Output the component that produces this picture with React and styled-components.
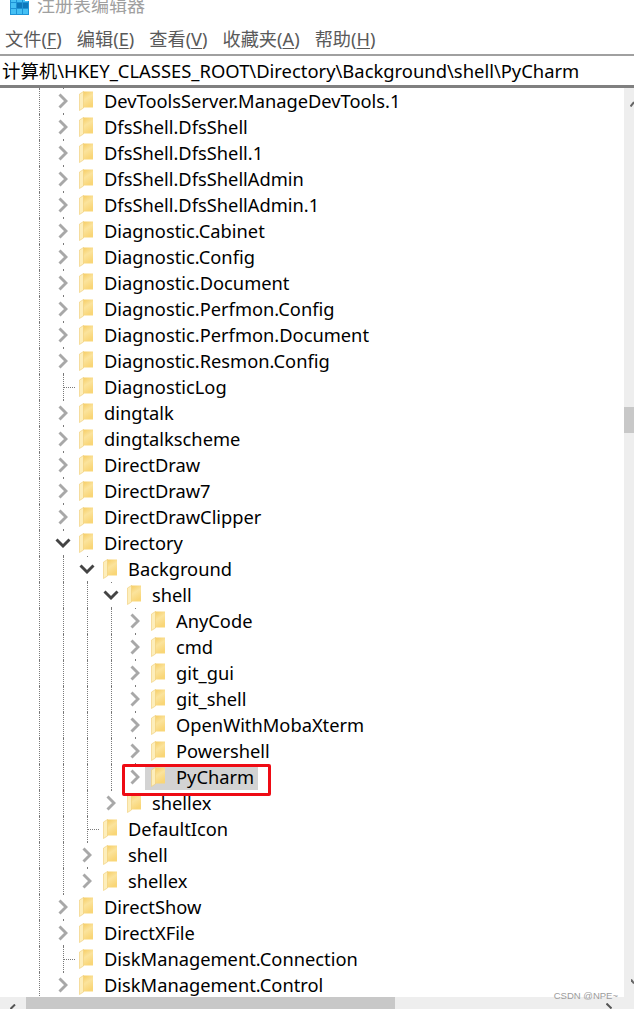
import React from 'react';
import styled, { createGlobalStyle } from 'styled-components';

const CJK = `"Noto Sans", "Noto Sans CJK SC", sans-serif`;

const GlobalStyle = createGlobalStyle`
  html, body { margin: 0; padding: 0; background: #fff; }
  body { width: 634px; height: 1009px; overflow: hidden; font-family: ${CJK}; }
`;

const Window = styled.div`
  position: relative;
  width: 634px;
  height: 1009px;
  display: flex;
  flex-direction: column;
  overflow: hidden;
`;

const TitleBar = styled.div`
  height: 22px;
  flex: none;
  display: flex;
  align-items: flex-start;
  gap: 8px;
  padding-left: 10px;
  overflow: hidden;
  svg { margin-top: -3px; }
`;

const TitleText = styled.span`
  margin-top: -7px;
  font-size: 18px;
  line-height: 24px;
  color: #a0a0a0;
`;

const MenuBar = styled.div`
  height: 32px;
  flex: none;
  display: flex;
  align-items: center;
  gap: 15px;
  padding-left: 5px;
  border-bottom: 2px solid #a0a0a0;
`;

const MenuItem = styled.span`
  font-size: 18.2px;
  color: #5a5a5a;
  u { text-underline-offset: 2px; }
`;

const PathBar = styled.div`
  height: 28px;
  flex: none;
  display: flex;
  align-items: center;
  padding: 0 0 1px 2px;
  font-size: 18.4px;
  color: #000;
  border-bottom: 3px solid #808080;
  white-space: nowrap;
`;

const Body = styled.div`
  flex: 1;
  display: flex;
  min-height: 0;
`;

const TreePane = styled.div`
  flex: 1;
  min-width: 0;
  display: flex;
  flex-direction: column;
`;

const Tree = styled.div`
  flex: 1;
  min-height: 0;
  overflow: hidden;
`;

const Row = styled.div`
  position: relative;
  height: 26px;
  display: flex;
  align-items: center;
  padding-left: ${(p) => 54 + p.$level * 24}px;
`;

const Guide = styled.i`
  position: absolute;
  top: 0;
  left: ${(p) => 39 + p.$column * 24}px;
  height: ${(p) => (p.$half ? '13px' : '26px')};
  border-left: 1px dotted #7a7a7a;
`;

const Tick = styled.i`
  position: absolute;
  top: 13px;
  left: ${(p) => 64 + p.$level * 24}px;
  width: 11px;
  border-top: 1px dotted #7a7a7a;
`;

const Expander = styled.span`
  position: relative;
  width: 18px;
  height: 24px;
  margin-right: 7px;
  display: flex;
  align-items: center;
  justify-content: center;
  background: ${(p) => (p.$empty ? 'transparent' : '#fff')};
`;

const Label = styled.span`
  position: relative;
  margin-left: 10px;
  font-size: 18.3px;
  line-height: 26px;
  color: #000;
  white-space: nowrap;
`;

const SelectedBand = styled.span`
  position: absolute;
  top: 3px;
  bottom: 0;
  left: 145px;
  width: 113px;
  background: #d3d3d3;
`;

const FolderSlot = styled.span`
  position: relative;
  display: flex;
`;

const Highlight = styled.span`
  position: absolute;
  left: 122px;
  top: 764px;
  width: 149px;
  height: 32px;
  box-sizing: border-box;
  border: 3px solid #ee0b14;
  border-radius: 2px;
  pointer-events: none;
`;

const VScroll = styled.div`
  position: relative;
  width: 10px;
  flex: none;
  background: #eeeeee;
`;

const VThumb = styled.div`
  height: 26px;
  margin-top: 319px;
  background: #c8c8c8;
`;

const HScroll = styled.div`
  position: relative;
  height: 12px;
  flex: none;
  background: #eeeeee;
  display: flex;
`;

const HThumb = styled.div`
  width: 369px;
  margin-left: 26px;
  background: #c8c8c8;
`;

const ArrowMark = styled.svg`
  position: absolute;
  left: ${(p) => p.$x}px;
  top: ${(p) => p.$y}px;
`;

const Watermark = styled.span`
  position: absolute;
  right: 16px;
  bottom: 8px;
  font-family: "Liberation Sans", sans-serif;
  font-size: 9.5px;
  color: #9c9c9c;
`;

const AppIcon = () => (
  <svg width="19" height="18" viewBox="0 0 19 18">
    <rect width="19" height="18" fill="#1e93d6" />
    <g fill="#45c0f4">
      <rect x="1" y="0" width="5" height="5" />
      <rect x="7" y="0" width="5" height="5" />
      <rect x="13" y="0" width="5" height="5" />
      <rect x="1" y="6" width="5" height="5" />
      <rect x="1" y="12" width="5" height="5" />
      <rect x="7" y="12" width="5" height="5" />
      <rect x="13" y="12" width="5" height="5" />
    </g>
    <g fill="#0d78bb">
      <rect x="7" y="6" width="5" height="5" />
      <rect x="13" y="6" width="5" height="5" />
    </g>
    <rect x="15" y="0" width="4" height="4" fill="#fff" />
  </svg>
);

const FolderIcon = () => (
  <svg width="15" height="20" viewBox="0 0 15 20">
    <defs>
      <linearGradient id="folderBody" x1="0" y1="0" x2="0.4" y2="1">
        <stop offset="0" stopColor="#f6cd62" />
        <stop offset="0.5" stopColor="#fbe39c" />
        <stop offset="1" stopColor="#f9d677" />
      </linearGradient>
    </defs>
    <path d="M4 0.5 H14 V16.5 H4 Z" fill="url(#folderBody)" />
    <path d="M0.5 3 L4.5 0.5 V17 L0.5 19.5 Z" fill="#fdeebb" stroke="#f0cd74" strokeWidth="0.6" />
  </svg>
);

const Chevron = ({ open }) =>
  open ? (
    <svg width="16" height="10" viewBox="0 0 16 10">
      <path d="M1.5 1.5 L8 8 L14.5 1.5" fill="none" stroke="#444" strokeWidth="2.9" />
    </svg>
  ) : (
    <svg width="10" height="16" viewBox="0 0 10 16">
      <path d="M1.5 1.5 L8 8 L1.5 14.5" fill="none" stroke="#a8a8a8" strokeWidth="2.9" />
    </svg>
  );

const leaf = (label) => ({ label });
const closed = (label, extra) => ({ label, closed: true, ...extra });

const roots = [
  closed('DevToolsServer.ManageDevTools.1'),
  closed('DfsShell.DfsShell'),
  closed('DfsShell.DfsShell.1'),
  closed('DfsShell.DfsShellAdmin'),
  closed('DfsShell.DfsShellAdmin.1'),
  closed('Diagnostic.Cabinet'),
  closed('Diagnostic.Config'),
  closed('Diagnostic.Document'),
  closed('Diagnostic.Perfmon.Config'),
  closed('Diagnostic.Perfmon.Document'),
  closed('Diagnostic.Resmon.Config'),
  leaf('DiagnosticLog'),
  closed('dingtalk'),
  closed('dingtalkscheme'),
  closed('DirectDraw'),
  closed('DirectDraw7'),
  closed('DirectDrawClipper'),
  {
    label: 'Directory',
    children: [
      {
        label: 'Background',
        children: [
          {
            label: 'shell',
            children: [
              closed('AnyCode'),
              closed('cmd'),
              closed('git_gui'),
              closed('git_shell'),
              closed('OpenWithMobaXterm'),
              closed('Powershell'),
              closed('PyCharm', { selected: true }),
            ],
          },
          closed('shellex'),
        ],
      },
      leaf('DefaultIcon'),
      closed('shell'),
      closed('shellex'),
    ],
  },
  closed('DirectShow'),
  closed('DirectXFile'),
  leaf('DiskManagement.Connection'),
  closed('DiskManagement.Control'),
];

// walks the tree, keeping which guide columns are still running
const flatten = (items, level, columns, openTail) =>
  items.flatMap((item, i) => {
    const last = openTail ? false : i === items.length - 1;
    const row = { ...item, level, columns, last };
    if (!item.children) return [row];
    return [row, ...flatten(item.children, level + 1, [...columns, ...(last ? [] : [level + 1])], false)];
  });

const rows = flatten(roots, 0, [0], true);

const Menu = ({ name, hotkey }) => (
  <MenuItem>
    {name}(<u>{hotkey}</u>)
  </MenuItem>
);

export default function App() {
  return (
    <Window>
      <GlobalStyle />
      <TitleBar>
        <AppIcon />
        <TitleText>注册表编辑器</TitleText>
      </TitleBar>
      <MenuBar>
        <Menu name="文件" hotkey="F" />
        <Menu name="编辑" hotkey="E" />
        <Menu name="查看" hotkey="V" />
        <Menu name="收藏夹" hotkey="A" />
        <Menu name="帮助" hotkey="H" />
      </MenuBar>
      <PathBar>计算机\HKEY_CLASSES_ROOT\Directory\Background\shell\PyCharm</PathBar>
      <Body>
        <TreePane>
          <Tree>
            {rows.map((row, i) => (
              <Row key={i} $level={row.level}>
                {row.columns.map((c) => (
                  <Guide key={c} $column={c} />
                ))}
                {!row.last && !row.columns.includes(row.level + 1) && <Guide $column={row.level + 1} />}
                {row.last && <Guide $column={row.level + 1} $half />}
                {row.selected && <SelectedBand />}
                {!row.closed && !row.children && <Tick $level={row.level} />}
                <Expander $empty={!row.closed && !row.children}>
                  {row.closed && <Chevron />}
                  {row.children && <Chevron open />}
                </Expander>
                <FolderSlot>
                  <FolderIcon />
                </FolderSlot>
                <Label>{row.label}</Label>
              </Row>
            ))}
          </Tree>
          <HScroll>
            <HThumb />
            <ArrowMark $x={10} $y={7} width="6" height="5" viewBox="0 0 6 5">
              <path d="M0.5 5 L5 0.5" stroke="#555" strokeWidth="2" />
            </ArrowMark>
            <ArrowMark $x={606} $y={6} width="6" height="6" viewBox="0 0 6 6">
              <path d="M0.5 0.5 L5.5 5.5" stroke="#555" strokeWidth="2" />
            </ArrowMark>
          </HScroll>
        </TreePane>
        <VScroll>
          <VThumb />
          <ArrowMark $x={6} $y={13} width="4" height="6" viewBox="0 0 4 6">
            <path d="M0.5 5.5 L4 1" stroke="#666" strokeWidth="2" />
          </ArrowMark>
          <ArrowMark $x={7} $y={891} width="3" height="6" viewBox="0 0 3 6">
            <path d="M0 0.5 L3 4.5" stroke="#666" strokeWidth="2" />
          </ArrowMark>
        </VScroll>
      </Body>
      <Highlight />
      <Watermark>CSDN @NPE~</Watermark>
    </Window>
  );
}
